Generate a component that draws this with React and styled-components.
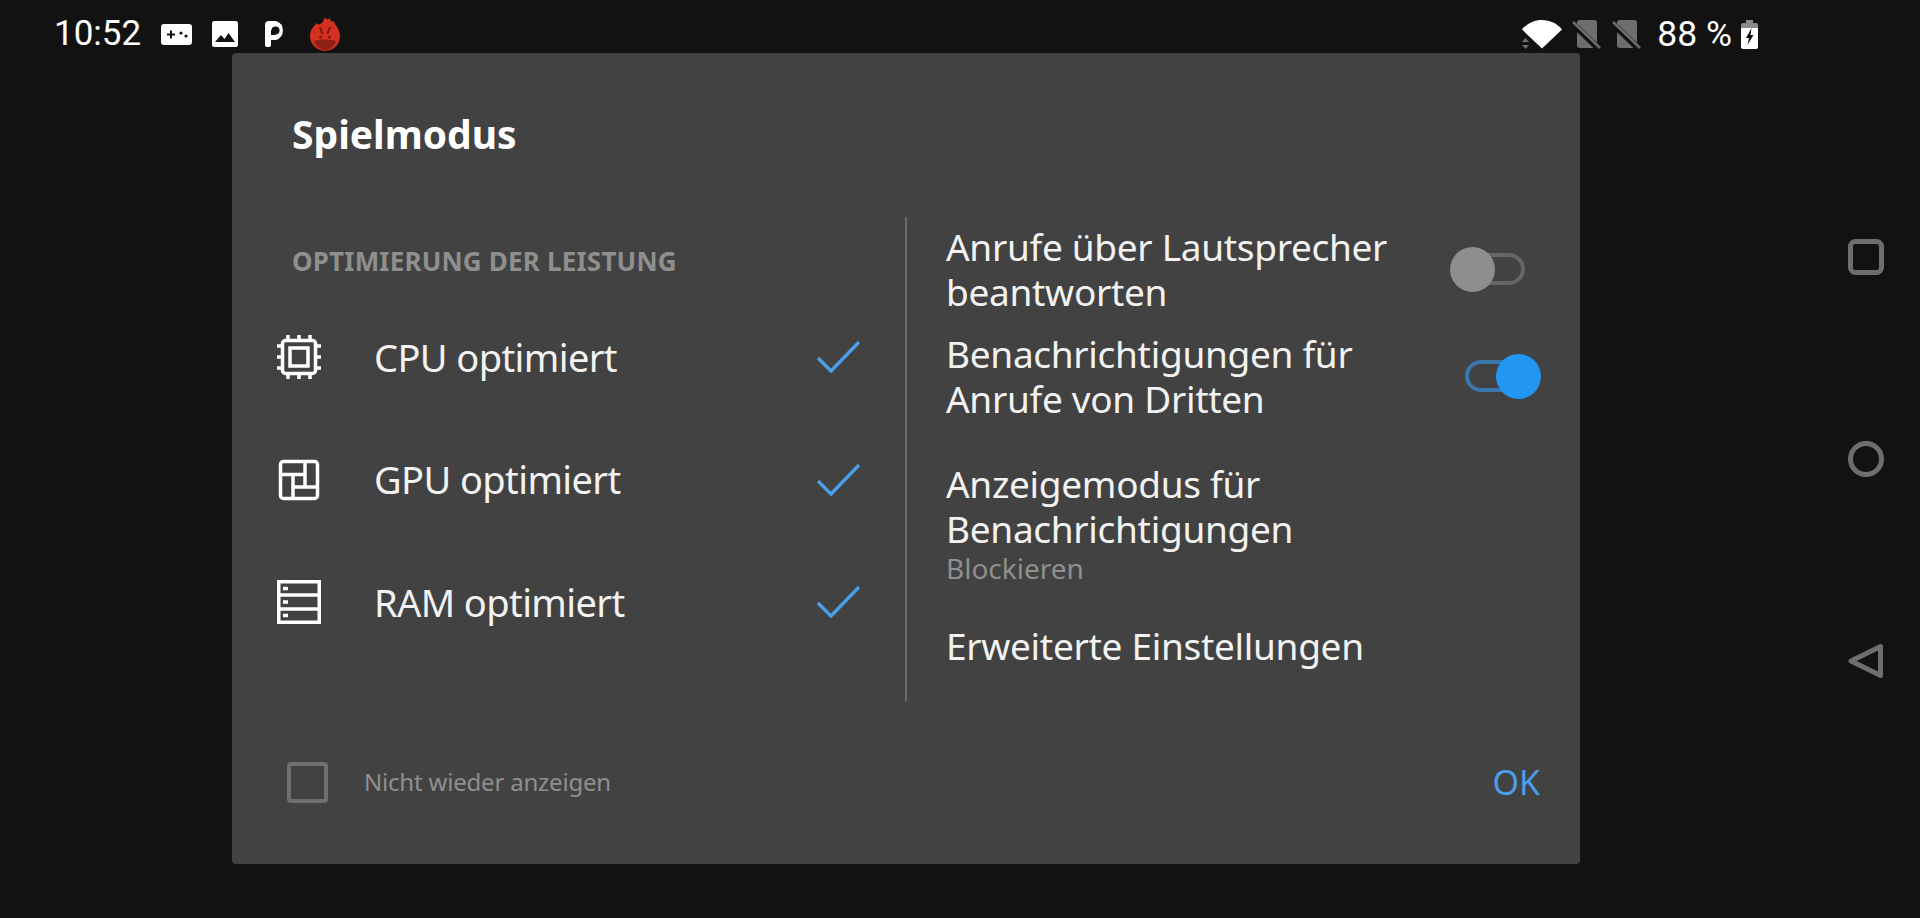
import React from "react"
import styled, { createGlobalStyle } from "styled-components"

const GlobalStyle = createGlobalStyle`
  html, body {
    margin: 0;
    background: #121212;
    font-family: "Noto Sans", "Open Sans", sans-serif;
  }
`

const Screen = styled.div`
  display: flex;
  width: 1920px;
  height: 918px;
  overflow: hidden;
  background: #121212;
`
const Main = styled.div`
  display: flex;
  flex-direction: column;
  width: 1812px;
`
const NavBar = styled.nav`
  display: flex;
  flex-direction: column;
  align-items: center;
  justify-content: center;
  gap: 166px;
  width: 108px;
`
const StatusBar = styled.header`
  display: flex;
  align-items: center;
  justify-content: space-between;
  height: 53px;
  padding: 15px 54px 0;
  box-sizing: border-box;
  flex: none;
`
const StatusGroup = styled.div`
  display: flex;
  align-items: center;
`
const Clock = styled.span`
  font: 35px/38px Roboto, sans-serif;
  color: #fff;
  margin-right: 20px;
`
const Battery = styled.span`
  font: 35.5px/38px Roboto, sans-serif;
  color: #fff;
  margin: 0 9px 0 17px;
`
const StatusIcon = styled.svg`
  display: block;
  flex: none;
  overflow: visible;
  margin-left: ${props => props.$left || 0}px;
`

const Dialog = styled.section`
  display: flex;
  flex-direction: column;
  height: 811px;
  margin: 0 232px;
  border-radius: 4px;
  background: #424242;
  color: #f2f2f2;
`
const Title = styled.h1`
  margin: 56px 0 58px 60px;
  font-size: 39px;
  line-height: 50px;
  font-weight: 700;
  color: #fff;
`
const Body = styled.div`
  display: flex;
  height: 484px;
`
const LeftColumn = styled.div`
  display: flex;
  flex-direction: column;
  width: 675px;
  padding: 26px 45px 0 45px;
  box-sizing: border-box;
  border-right: 2px solid #6b6b6b;
  flex: none;
`
const SectionLabel = styled.div`
  margin: 0 0 17px 15px;
  font-size: 26px;
  letter-spacing: 0.2px;
  line-height: 36px;
  font-weight: 700;
  color: #8f8f8f;
`
const OptionRow = styled.div`
  display: flex;
  align-items: center;
  height: 122.5px;
`
const OptionIcon = styled.svg`
  display: block;
  flex: none;
  margin-right: 53px;
`
const OptionName = styled.span`
  flex: 1;
  font-size: 38px;
  letter-spacing: -0.6px;
  line-height: 45px;
`
const CheckIcon = styled.svg`
  display: block;
  flex: none;
`
const RightColumn = styled.div`
  display: flex;
  flex-direction: column;
  flex: 1;
  padding: 7px 0 0 39px;
`
const SettingRow = styled.div`
  display: flex;
  align-items: center;
  justify-content: space-between;
  margin-top: ${props => props.$top || 0}px;
  padding-right: 55px;
`
const SettingText = styled.div`
  font-size: 37px;
  letter-spacing: -0.3px;
  line-height: 45px;
`
const SettingSub = styled.div`
  font-size: 28px;
  line-height: 35px;
  color: #8f8f8f;
`
const Toggle = styled.div`
  position: relative;
  flex: none;
  width: 60px;
  height: 32px;
  box-sizing: border-box;
  border-radius: 16px;
  border: 4px solid ${props => (props.$on ? "#3a77ad" : "#666666")};
`
const Knob = styled.div`
  position: absolute;
  top: -10.5px;
  left: ${props => (props.$on ? "27px" : "-19px")};
  width: 45px;
  height: 45px;
  border-radius: 50%;
  background: ${props => (props.$on ? "#2196f3" : "#8e8e8e")};
`
const Footer = styled.footer`
  display: flex;
  align-items: center;
  height: 163px;
  padding: 0 40px 0 55px;
`
const Checkbox = styled.div`
  width: 41px;
  height: 41px;
  box-sizing: border-box;
  border: 4px solid #6f6f6f;
  border-radius: 4px;
  flex: none;
`
const CheckboxLabel = styled.span`
  flex: 1;
  margin: 0 0 2px 36px;
  font-size: 24px;
  letter-spacing: -0.2px;
  line-height: 34px;
  color: #8f8f8f;
`
const OkButton = styled.span`
  margin-bottom: 2px;
  font-size: 34px;
  line-height: 40px;
  color: #4a9fe8;
`

const CpuIcon = () => (
  <OptionIcon width="44" height="44" viewBox="0 0 44 44" fill="none" stroke="#fff" strokeWidth="3.5">
    <rect x="5.5" y="5.5" width="33" height="33" rx="3" />
    <rect x="13" y="13" width="18" height="18" />
    <path d="M11 0v5M22 0v5M33 0v5M11 39v5M22 39v5M33 39v5M0 11h5M0 22h5M0 33h5M39 11h5M39 22h5M39 33h5" />
  </OptionIcon>
)
const GpuIcon = () => (
  <OptionIcon width="44" height="44" viewBox="-2 -2 44 44" fill="none" stroke="#fff" strokeWidth="3.5">
    <rect x="1.5" y="1.5" width="37" height="37" rx="3" />
    <path d="M1.5 14.5H26M26 1.5V27M14 14.5V38.5M14 27H38.5" />
  </OptionIcon>
)
const RamIcon = () => (
  <OptionIcon width="44" height="44" viewBox="0 0 44 44" fill="none" stroke="#fff" strokeWidth="3.5">
    <rect x="1.75" y="1.75" width="40.5" height="40.5" />
    <path d="M1.75 15h40.5M1.75 29h40.5" />
    <path d="M6 8.5h5M6 22h5M6 35.5h5" />
  </OptionIcon>
)
const CheckMark = () => (
  <CheckIcon width="43" height="32" viewBox="0 0 43 32" fill="none" stroke="#4a9fe8" strokeWidth="3.4">
    <path d="M1 17l13 13L42 1" />
  </CheckIcon>
)
const SimOff = ({ left }) => (
  <StatusIcon $left={left} width="27" height="29" viewBox="0 0 27 29">
    <path d="M7 0h14a3 3 0 0 1 3 3v22a3 3 0 0 1-3 3H7a3 3 0 0 1-3-3V3a3 3 0 0 1 3-3z" fill="#6e6e6e" />
    <path d="M0 4l26 25" stroke="#121212" strokeWidth="6" />
    <path d="M0 2l27 26" stroke="#6e6e6e" strokeWidth="2.5" />
  </StatusIcon>
)

const options = [
  { name: "CPU optimiert", Icon: CpuIcon },
  { name: "GPU optimiert", Icon: GpuIcon },
  { name: "RAM optimiert", Icon: RamIcon },
]

const App = () => {
  return (
    <Screen>
      <GlobalStyle />
      <Main>
        <StatusBar>
          <StatusGroup>
            <Clock>10:52</Clock>
            <StatusIcon width="31" height="21" viewBox="0 0 31 21">
              <rect width="31" height="21" rx="3" fill="#fff" />
              <path d="M6 10.5h8M10 6.5v8" stroke="#121212" strokeWidth="2" />
              <circle cx="20" cy="9" r="1.6" fill="#121212" />
              <circle cx="25" cy="12" r="1.6" fill="#121212" />
            </StatusIcon>
            <StatusIcon $left={20} width="26" height="26" viewBox="0 0 26 26">
              <rect width="26" height="26" rx="2.5" fill="#fff" />
              <path d="M3 21l6-7 3.5 4 4-6L23 21z" fill="#121212" />
            </StatusIcon>
            <StatusIcon $left={27} width="21" height="26" viewBox="0 0 21 26">
              <path d="M0 4a4 4 0 0 1 4-4h7a10 10 0 0 1 0 19H6v5a2 2 0 0 1-2 2H2a2 2 0 0 1-2-2z" fill="#fff" />
              <circle cx="10.5" cy="9.5" r="4" fill="#121212" />
              <rect x="6" y="9" width="4" height="5" fill="#121212" />
            </StatusIcon>
            <StatusIcon $left={24} width="30" height="34" viewBox="0 0 30 34">
              <path d="M15 0c1 3 3 3 5 1 0 3 2 4 4 3 0 3 6 8 6 15a15 15 0 0 1-30 0C0 12 5 8 7 6c1 2 3 2 4 0 1 1 3-3 4-6z" fill="#d3301f" />
              <path d="M4 24c5-2 17-2 22 0-2 6-7 9-11 9S6 30 4 24z" fill="#8f1f16" />
              <path d="M10 10l2.5 7M20 10l-2.5 7" stroke="#7e1a12" strokeWidth="2" fill="none" />
              <circle cx="10.5" cy="20" r="1.5" fill="#7e1a12" />
              <circle cx="19.5" cy="20" r="1.5" fill="#7e1a12" />
            </StatusIcon>
          </StatusGroup>
          <StatusGroup>
            <StatusIcon width="40" height="29" viewBox="0 0 40 29">
              <path d="M0 9.5C5 3.5 12 0 20 0s15 3.5 20 9.5L20 28.5z" fill="#fff" />
              <path d="M3.5 18l3.5 4h-7zM3.5 29l3.5-4h-7z" fill="#6e6e6e" />
            </StatusIcon>
            <SimOff left={11} />
            <SimOff left={13} />
            <Battery>88 %</Battery>
            <StatusIcon width="17" height="29" viewBox="0 0 17 29">
              <path d="M5 0h7v3h3a2 2 0 0 1 2 2v3H0V5a2 2 0 0 1 2-2h3z" fill="#8a8a8a" />
              <path d="M0 8h17v19a2 2 0 0 1-2 2H2a2 2 0 0 1-2-2z" fill="#fff" />
              <path d="M10.5 8L5 18h3l-1.5 7 6-10H9.5z" fill="#121212" />
            </StatusIcon>
          </StatusGroup>
        </StatusBar>
        <Dialog>
          <Title>Spielmodus</Title>
          <Body>
            <LeftColumn>
              <SectionLabel>OPTIMIERUNG DER LEISTUNG</SectionLabel>
              {options.map(({ name, Icon }) => (
                <OptionRow key={name}>
                  <Icon />
                  <OptionName>{name}</OptionName>
                  <CheckMark />
                </OptionRow>
              ))}
            </LeftColumn>
            <RightColumn>
              <SettingRow>
                <SettingText>Anrufe über Lautsprecher<br />beantworten</SettingText>
                <Toggle><Knob /></Toggle>
              </SettingRow>
              <SettingRow $top={17}>
                <SettingText>Benachrichtigungen für<br />Anrufe von Dritten</SettingText>
                <Toggle $on><Knob $on /></Toggle>
              </SettingRow>
              <SettingRow $top={40}>
                <div>
                  <SettingText>Anzeigemodus für<br />Benachrichtigungen</SettingText>
                  <SettingSub>Blockieren</SettingSub>
                </div>
              </SettingRow>
              <SettingRow $top={37}>
                <SettingText>Erweiterte Einstellungen</SettingText>
              </SettingRow>
            </RightColumn>
          </Body>
          <Footer>
            <Checkbox />
            <CheckboxLabel>Nicht wieder anzeigen</CheckboxLabel>
            <OkButton>OK</OkButton>
          </Footer>
        </Dialog>
      </Main>
      <NavBar>
        <svg width="36" height="36" viewBox="0 0 36 36" fill="none" stroke="#6e6e6e" strokeWidth="5">
          <rect x="2.5" y="2.5" width="31" height="31" rx="5" />
        </svg>
        <svg width="36" height="36" viewBox="0 0 36 36" fill="none" stroke="#6e6e6e" strokeWidth="5">
          <circle cx="18" cy="18" r="15.5" />
        </svg>
        <svg width="36" height="36" viewBox="0 0 36 36" fill="none" stroke="#6e6e6e" strokeWidth="5" strokeLinejoin="round">
          <path d="M32.5 3.5v29L3 18z" />
        </svg>
      </NavBar>
    </Screen>
  )
}

export default App
